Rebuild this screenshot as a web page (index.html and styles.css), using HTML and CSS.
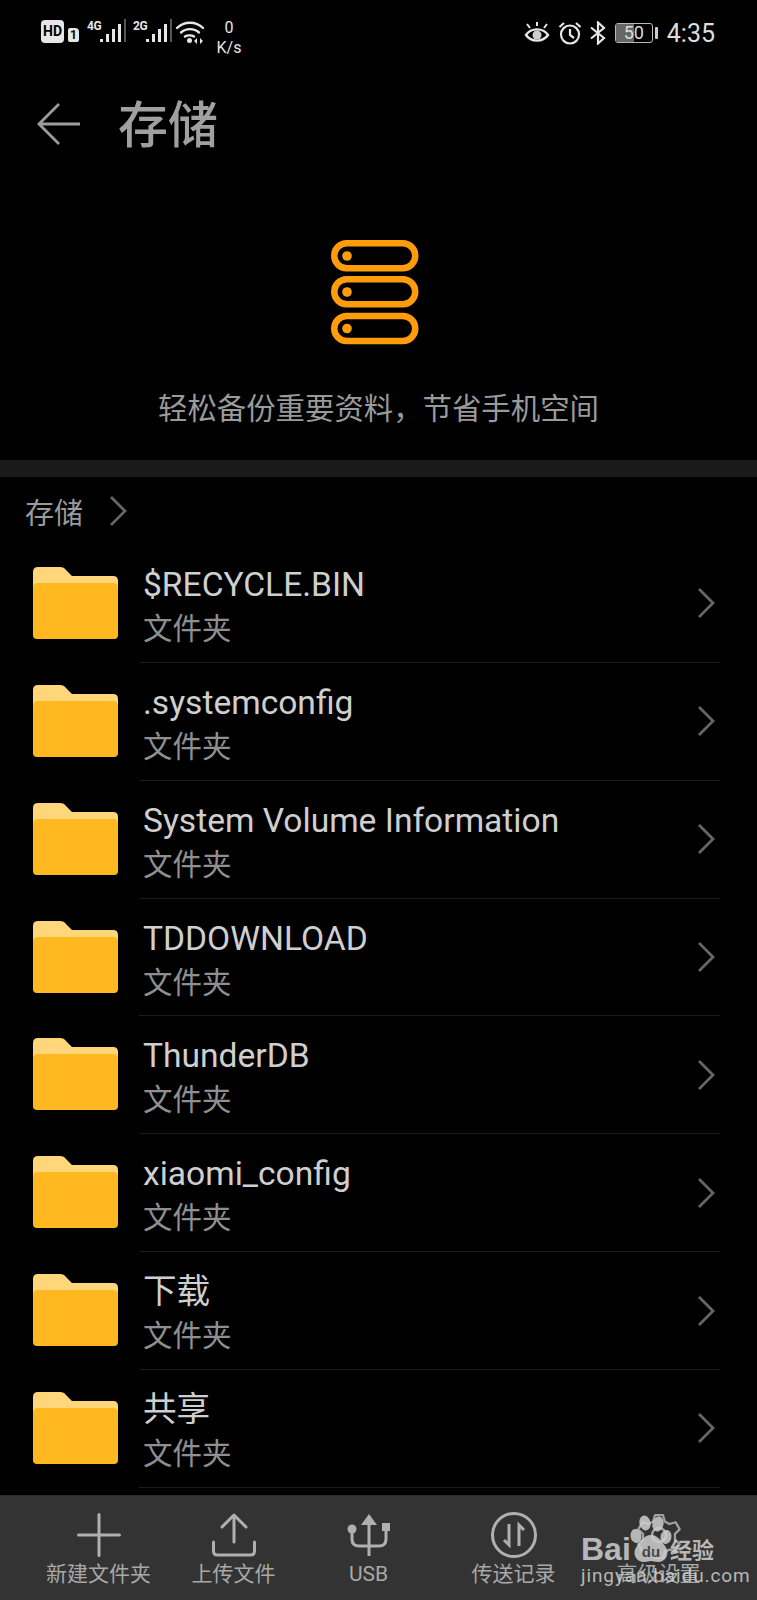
FILE: index.html
```html
<!DOCTYPE html>
<html lang="zh-CN">
<head>
    <meta charset="UTF-8">
    <meta name="viewport" content="width=device-width, initial-scale=1.0">
    <title>存储</title>
    <link rel="stylesheet" href="styles.css">
</head>
<body>
<div class="page">
    <!-- status bar -->
    <div class="status">
        <div class="status-left">
            <span class="hd">HD</span>
            <span class="sim">1</span>
            <span class="net">
                <span class="net-label">4G</span>
                <svg width="28" height="24" viewBox="0 0 28 24"><g fill="#e6e6e6"><rect x="0" y="20" width="3" height="3"/><rect x="6" y="15" width="3" height="8"/><rect x="12" y="10" width="3" height="13"/><rect x="18" y="5" width="3" height="18"/></g><rect x="24" y="0" width="2" height="23" fill="#555"/></svg>
            </span>
            <span class="net">
                <span class="net-label">2G</span>
                <svg width="28" height="24" viewBox="0 0 28 24"><g fill="#e6e6e6"><rect x="0" y="20" width="3" height="3"/><rect x="6" y="15" width="3" height="8"/><rect x="12" y="10" width="3" height="13"/><rect x="18" y="5" width="3" height="18"/></g><rect x="24" y="0" width="2" height="23" fill="#555"/></svg>
            </span>
            <svg class="wifi" width="30" height="24" viewBox="0 0 30 24" fill="none" stroke="#e6e6e6" stroke-width="2.400" stroke-linecap="round">
                <path d="M2 8C9 1 21 1 28 8"/>
                <path d="M6 12.500C11 8 19 8 24 12.500"/>
                <path d="M10 16.500C12 15 17 15 19 16.500"/>
                <circle cx="14.500" cy="20.500" r="2.500" fill="#e6e6e6" stroke="none"/>
                <path d="M22 18l-3 3 3 3zM25 18l3 3-3 3z" fill="#e6e6e6" stroke="none"/>
            </svg>
            <span class="speed"><span>0</span><span>K/s</span></span>
        </div>
        <div class="status-right">
            <svg width="26" height="24" viewBox="0 0 26 24" fill="none" stroke="#e6e6e6" stroke-width="2.400">
                <path d="M2 14C7 6.500 19 6.500 24 14C19 21.500 7 21.500 2 14Z"/>
                <circle cx="13" cy="14" r="4.500" fill="#cfcfcf" stroke="none"/>
                <path d="M13 1v4M3 3l3 4M23 3l-3 4" stroke-width="2"/>
            </svg>
            <svg width="24" height="24" viewBox="0 0 24 24" fill="none" stroke="#e6e6e6" stroke-width="2.200">
                <circle cx="12" cy="13.500" r="9"/>
                <path d="M12 8v6l4 3M1.500 6L6 2M22.500 6L18 2"/>
            </svg>
            <svg width="16" height="24" viewBox="0 0 16 24" fill="none" stroke="#e6e6e6" stroke-width="2.200">
                <path d="M1 6.500L14 17 8 22.500V1.500L14 7 1 17.500"/>
            </svg>
            <span class="battery"><span class="battery-level"></span><span class="battery-num">50</span></span>
            <span class="battery-nub"></span>
            <span class="clock">4:35</span>
        </div>
    </div>

    <!-- title -->
    <div class="header">
        <svg class="back" width="44" height="44" viewBox="0 0 44 44" fill="none" stroke="#9c9c9c" stroke-width="2.800">
            <path d="M43 22H3M22 2L2 22 22 42"/>
        </svg>
        <h1>存储</h1>
    </div>

    <!-- storage banner -->
    <div class="hero">
        <svg width="88" height="105" viewBox="0 0 88 105">
            <g fill="none" stroke="#ff9c0c" stroke-width="6.500">
                <rect x="3.250" y="3.250" width="81" height="25" rx="12.500"/>
                <rect x="3.250" y="39.250" width="81" height="25" rx="12.500"/>
                <rect x="3.250" y="76" width="81" height="25" rx="12.500"/>
            </g>
            <g fill="#ff9c0c">
                <circle cx="16" cy="16" r="4.800"/>
                <circle cx="16" cy="52" r="4.800"/>
                <circle cx="16" cy="88.500" r="4.800"/>
            </g>
        </svg>
        <p>轻松备份重要资料，节省手机空间</p>
    </div>

    <div class="band"></div>

    <div class="crumb">
        <span>存储</span>
        <svg width="18" height="30" viewBox="0 0 18 30" fill="none" stroke="#666" stroke-width="2.800"><path d="M2 1l14 14L2 29"/></svg>
    </div>

    <!-- folders -->
    <ul class="list" id="list"></ul>

    <!-- bottom actions -->
    <div class="toolbar">
        <div class="tool">
            <svg width="48" height="48" viewBox="0 0 48 48" fill="none" stroke="#b0b0b0" stroke-width="3" stroke-linecap="round">
                <path d="M24 3.500v41M3.500 24h41"/>
            </svg>
            <span>新建文件夹</span>
        </div>
        <div class="tool">
            <svg width="48" height="48" viewBox="0 0 48 48" fill="none" stroke="#b0b0b0" stroke-width="3" stroke-linecap="round" stroke-linejoin="round">
                <path d="M24 31V5M12 16L24 4l12 12"/>
                <path d="M3.500 31v9q0 4 4 4h33q4 0 4-4v-9"/>
            </svg>
            <span>上传文件</span>
        </div>
        <div class="tool">
            <svg width="48" height="48" viewBox="0 0 48 48" fill="none" stroke="#b0b0b0" stroke-width="3">
                <path d="M24 10v35"/>
                <path d="M24 3l8 11H16z" fill="#b0b0b0" stroke="none"/>
                <path d="M7 18v10q0 7 7 7h10M41 18v10q0 7-7 7H24"/>
                <circle cx="7" cy="18" r="4.500" fill="#b0b0b0" stroke="none"/>
                <rect x="37" y="12" width="8" height="8" fill="#b0b0b0" stroke="none"/>
            </svg>
            <span>USB</span>
        </div>
        <div class="tool">
            <svg width="48" height="48" viewBox="0 0 48 48" fill="none" stroke="#b0b0b0" stroke-width="3">
                <circle cx="24" cy="24" r="21.500"/>
                <path d="M19 13v21l-5-5M29 35V14l5 5" stroke-width="3"/>
            </svg>
            <span>传送记录</span>
        </div>
        <div class="tool">
            <svg width="48" height="48" viewBox="0 0 48 48" fill="none" stroke="#a0a0a0" stroke-width="2.500" stroke-linejoin="round">
                <path d="M19.500 2h9l2 7 5 2.800 7-2 4.500 8-5.300 5v6.400l5.300 5-4.500 8-7-2-5 2.800-2 7h-9l-2-7-5-2.800-7 2-4.500-8 5.300-5v-6.400l-5.300-5 4.500-8 7 2 5-2.800z" transform="translate(2.400 2.400) scale(.9)"/>
                <circle cx="24" cy="24" r="7"/>
            </svg>
            <span>高级设置</span>
        </div>

        <!-- watermark lying over the last tool -->
        <div class="mark">
            <div class="mark-top">
                <span class="mark-bai">Bai</span>
                <svg class="mark-paw" width="46" height="50" viewBox="0 0 46 50">
                    <g fill="#cfcfcf">
                        <ellipse cx="8" cy="21" rx="5.500" ry="7" transform="rotate(-10 8 21)"/>
                        <ellipse cx="17" cy="8" rx="5.500" ry="7.500" transform="rotate(-15 17 8)"/>
                        <ellipse cx="30" cy="9" rx="5.500" ry="7.500" transform="rotate(15 30 9)"/>
                        <ellipse cx="38" cy="22" rx="5.500" ry="7" transform="rotate(10 38 22)"/>
                        <path d="M23 20c7 0 10 6 14 11 5 6 2 16-7 16-3 0-5-1-7-1s-4 1-7 1c-9 0-12-10-7-16 4-5 7-11 14-11z"/>
                    </g>
                    <text x="23" y="42" text-anchor="middle" class="mark-du">du</text>
                </svg>
                <span class="mark-cn">经验</span>
            </div>
            <div class="mark-url">jingyan.baidu.com</div>
        </div>
    </div>
</div>

<script>
    // Build the folder rows
    const names = ['$RECYCLE.BIN', '.systemconfig', 'System Volume Information', 'TDDOWNLOAD', 'ThunderDB', 'xiaomi_config', '下载', '共享'];
    const list = document.getElementById('list');

    names.forEach(function (name) {
        const row = document.createElement('li');
        row.className = 'row';
        row.innerHTML = `
            <svg class="folder" width="85" height="72" viewBox="0 0 85 72">
                <path d="M0 16V5q0-5 5-5h22q4 0 6 3l6 6h41q5 0 5 5v10H0z" fill="#ffd67a"/>
                <path d="M0 21q0-5 5-5h75q5 0 5 5v47q0 4-4 4H4q-4 0-4-4z" fill="#ffb81f"/>
            </svg>
            <div class="row-body">
                <div class="row-text">
                    <div class="row-name">${name}</div>
                    <div class="row-sub">文件夹</div>
                </div>
                <svg width="18" height="30" viewBox="0 0 18 30" fill="none" stroke="#666" stroke-width="2.800"><path d="M2 1l14 14L2 29"/></svg>
            </div>
        `;
        list.appendChild(row);
    });
</script>
</body>
</html>
```

FILE: styles.css
```css
* {
    box-sizing: border-box;
}
body {
    margin: 0;
    background: #000;
    font-family: Roboto, "Noto Sans CJK SC", sans-serif;
}
.page {
    width: 757px;
    height: 1600px;
    overflow: hidden;
    display: flex;
    flex-direction: column;
    background: #000;
}
.status {
    height: 64px;
    padding: 20px 42px 0 41px;
    display: flex;
    justify-content: space-between;
    align-items: flex-start;
    color: #e6e6e6;
}
.status-left {
    display: flex;
    align-items: flex-start;
}
.status-right {
    display: flex;
    align-items: center;
    height: 26px;
    gap: 8px;
}
.hd {
    width: 23px;
    height: 23px;
    border-radius: 4px;
    background: #e6e6e6;
    color: #000;
    font-size: 14px;
    font-weight: 700;
    line-height: 23px;
    text-align: center;
}
.sim {
    width: 11px;
    height: 14px;
    margin: 8px 8px 0 4px;
    border-radius: 2px 4px 2px 2px;
    background: #e6e6e6;
    color: #000;
    font-size: 12px;
    font-weight: 700;
    line-height: 14px;
    text-align: center;
}
.net {
    display: flex;
    width: 46px;
    align-items: flex-start;
}
.net-label {
    width: 13px;
    font-size: 12px;
    font-weight: 700;
    line-height: 12px;
    letter-spacing: -0.500px;
}
.net svg {
    margin-top: -1px;
}
.wifi {
    margin: 0 11px 0 -4px;
}
.speed {
    display: flex;
    flex-direction: column;
    align-items: center;
    width: 26px;
    margin-top: -2px;
    font-size: 16px;
    line-height: 20px;
}
.battery {
    position: relative;
    width: 38px;
    height: 20px;
    margin-left: 1px;
    border: 1px solid #bbb;
    border-radius: 3px;
    overflow: hidden;
}
.battery-level {
    display: block;
    width: 50%;
    height: 100%;
    background: #666;
}
.battery-num {
    position: absolute;
    inset: 0;
    font-size: 18px;
    line-height: 18px;
    text-align: center;
    color: #ddd;
}
.battery-nub {
    width: 3px;
    height: 12px;
    margin-left: -6px;
    border-radius: 1px;
    background: #ccc;
}
.clock {
    font-size: 25px;
    color: #ddd;
    margin-left: 1px;
}
.header {
    height: 120px;
    padding-left: 37px;
    display: flex;
    align-items: center;
}
.back {
    flex: none;
}
h1 {
    margin: 0 0 6px 37px;
    font-size: 50px;
    font-weight: 500;
    color: #a0a0a0;
}
.hero {
    height: 276px;
    padding-top: 56px;
    display: flex;
    flex-direction: column;
    align-items: center;
}
.hero svg {
    flex: none;
    margin-right: 8px;
}
.hero p {
    margin: 42px 0 0;
    font-size: 29.400px;
    line-height: 44px;
    color: #9a9a9a;
}
.band {
    height: 17px;
    background: #1a1a1a;
}
.crumb {
    height: 68px;
    padding-left: 25px;
    display: flex;
    align-items: center;
    gap: 26px;
    font-size: 29px;
    color: #9a9a9a;
}
.list {
    list-style: none;
    margin: 0;
    padding: 0;
}
.row {
    height: 117.860px;
    padding: 0 37px 0 33px;
    display: flex;
    align-items: center;
}
.folder {
    flex: none;
    margin: 0 21px 2px 0;
}
.row-body {
    flex: 1;
    height: 100%;
    padding: 0 5px 0 4px;
    display: flex;
    align-items: center;
    justify-content: space-between;
    border-bottom: 1px solid #1c1c1c;
}
.row-text {
    padding-top: 5px;
}
.row-name {
    font-size: 33.600px;
    line-height: 44px;
    color: #cfcfcf;
}
.row-sub {
    margin-top: 2px;
    font-size: 29.500px;
    line-height: 40px;
    color: #8f8f8f;
}
.toolbar {
    position: relative;
    margin-top: 7px;
    flex: 1;
    padding: 15px 0 0 31px;
    display: grid;
    grid-template-columns: 135px 135px 135px 155px 135px;
    justify-content: start;
    align-items: start;
    background: #333;
    border-top: 1px solid #2a2a2a;
}
.tool {
    display: flex;
    flex-direction: column;
    align-items: center;
    font-size: 21px;
    line-height: 30px;
    color: #a8a8a8;
}
.mark {
    position: absolute;
    left: 581px;
    top: 21px;
    width: 142px;
    color: #cfcfcf;
    opacity: 0.850;
}
.mark-top {
    display: flex;
    align-items: flex-end;
    height: 48px;
}
.mark-bai {
    font-family: "Liberation Sans", sans-serif;
    font-size: 32px;
    font-weight: 700;
    line-height: 30px;
    width: 50px;
    margin-bottom: 1px;
}
.mark-paw {
    margin-left: -3px;
}
.mark-du {
    font-family: "Liberation Sans", sans-serif;
    font-size: 15px;
    font-weight: 700;
    fill: #444;
}
.mark-cn {
    font-size: 22px;
    font-weight: 700;
    line-height: 28px;
    margin-left: -4px;
    white-space: nowrap;
}
.mark-url {
    font-size: 19px;
    line-height: 22px;
    letter-spacing: 0.900px;
}
```
